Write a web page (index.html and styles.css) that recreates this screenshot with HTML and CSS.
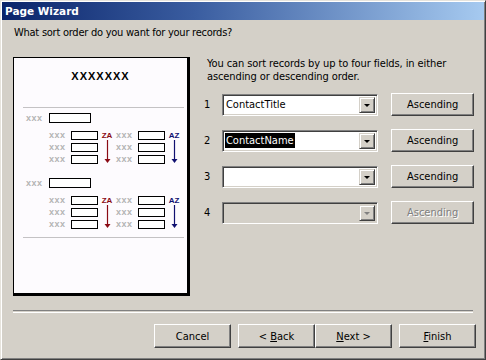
FILE: index.html
```html
<!DOCTYPE html>
<html>
<head>
  <title>Page Wizard</title>
  <link rel="stylesheet" href="styles.css">
</head>
<body>
  <div class="window">
    <div class="titlebar">Page Wizard</div>
    <div class="content">
      <p class="question">What sort order do you want for your records?</p>
      <div class="main">
        <div class="preview">
          <div class="preview-title">XXXXXXX</div>
          <div class="rule"></div>
          <div class="group">
            <div class="group-head"><span class="xxx">xxx</span><span class="box wide"></span></div>
            <div class="group-grid">
              <span class="xxx">xxx</span><span class="box"></span>
              <div class="sort desc"><span>ZA</span><svg width="7" height="24" viewBox="0 0 7 24"><line x1="3.5" y1="0" x2="3.5" y2="20" stroke="#8a0a14" stroke-width="1.2"/><path d="M0.5 19 L6.5 19 L3.5 23 Z" fill="#8a0a14"/></svg></div>
              <span class="xxx">xxx</span><span class="box"></span>
              <div class="sort asc"><span>AZ</span><svg width="7" height="24" viewBox="0 0 7 24"><line x1="3.5" y1="0" x2="3.5" y2="20" stroke="#101070" stroke-width="1.2"/><path d="M0.5 19 L6.5 19 L3.5 23 Z" fill="#101070"/></svg></div>
              <span class="xxx">xxx</span><span class="box"></span>
              <span class="xxx">xxx</span><span class="box"></span>
              <span class="xxx">xxx</span><span class="box"></span>
              <span class="xxx">xxx</span><span class="box"></span>
            </div>
          </div>
          <div class="group second">
            <div class="group-head"><span class="xxx">xxx</span><span class="box wide"></span></div>
            <div class="group-grid">
              <span class="xxx">xxx</span><span class="box"></span>
              <div class="sort desc"><span>ZA</span><svg width="7" height="24" viewBox="0 0 7 24"><line x1="3.5" y1="0" x2="3.5" y2="20" stroke="#8a0a14" stroke-width="1.2"/><path d="M0.5 19 L6.5 19 L3.5 23 Z" fill="#8a0a14"/></svg></div>
              <span class="xxx">xxx</span><span class="box"></span>
              <div class="sort asc"><span>AZ</span><svg width="7" height="24" viewBox="0 0 7 24"><line x1="3.5" y1="0" x2="3.5" y2="20" stroke="#101070" stroke-width="1.2"/><path d="M0.5 19 L6.5 19 L3.5 23 Z" fill="#101070"/></svg></div>
              <span class="xxx">xxx</span><span class="box"></span>
              <span class="xxx">xxx</span><span class="box"></span>
              <span class="xxx">xxx</span><span class="box"></span>
              <span class="xxx">xxx</span><span class="box"></span>
            </div>
          </div>
          <div class="rule lower"></div>
        </div>

        <div class="options">
          <p class="hint">You can sort records by up to four fields, in either<br>ascending or descending order.</p>
          <div class="sort-row">
            <span class="num">1</span>
            <div class="combo"><span class="value">ContactTitle</span><span class="drop"></span></div>
            <button class="btn order">Ascending</button>
          </div>
          <div class="sort-row">
            <span class="num">2</span>
            <div class="combo"><span class="value selected">ContactName</span><span class="drop"></span></div>
            <button class="btn order">Ascending</button>
          </div>
          <div class="sort-row">
            <span class="num">3</span>
            <div class="combo"><span class="value"></span><span class="drop"></span></div>
            <button class="btn order">Ascending</button>
          </div>
          <div class="sort-row disabled">
            <span class="num">4</span>
            <div class="combo"><span class="value"></span><span class="drop"></span></div>
            <button class="btn order" disabled>Ascending</button>
          </div>
        </div>
      </div>
      <div class="separator"></div>
      <div class="buttons">
        <button class="btn">Cancel</button>
        <button class="btn back">&lt; <u>B</u>ack</button>
        <button class="btn"><u>N</u>ext &gt;</button>
        <button class="btn finish"><u>F</u>inish</button>
      </div>
    </div>
  </div>
</body>
</html>
```

FILE: styles.css
```css
body {
  margin: 0;
  background-color: #d4d0c8;
  font-family: "DejaVu Sans Condensed", "DejaVu Sans", sans-serif;
  font-size: 11px;
  color: #000;
}

.window {
  width: 486px;
  height: 360px;
  box-sizing: border-box;
  background-color: #d4d0c8;
  border: 1px solid;
  border-color: #e6e3dc #404040 #404040 #e6e3dc;
  box-shadow: inset 1px 1px #fff, inset -1px -1px #808080;
  display: flex;
  flex-direction: column;
}

.titlebar {
  margin: 1px 1px 0;
  height: 18px;
  padding-left: 3px;
  line-height: 18px;
  font-family: "DejaVu Sans", sans-serif;
  font-weight: bold;
  font-size: 10.5px;
  color: #fff;
  background: linear-gradient(to right, #0a246a 0%, #3a5da0 40%, #a6caf0 100%);
}

.content {
  padding: 6px 0 0 12px;
}

.question {
  margin: 0 0 18px 1px;
  line-height: 13px;
  letter-spacing: -0.25px;
}

.main {
  display: flex;
  gap: 14px;
  height: 239px;
}

/* page preview */
.preview {
  width: 173px;
  height: 235px;
  background-color: #fdfbfe;
  border: 1px solid #000;
  border-right-width: 3px;
  border-bottom-width: 3px;
}

.preview-title {
  margin-top: 11px;
  height: 14px;
  line-height: 14px;
  text-align: center;
  font-family: "Liberation Sans", Arial, sans-serif;
  font-weight: bold;
  font-size: 11px;
  letter-spacing: 1px;
}

.rule {
  height: 1px;
  margin: 24px 3px 0 9px;
  background-color: #c4c2c4;
}

.rule.lower {
  margin-top: 8px;
}

.group {
  margin-top: 5px;
}

.group.second {
  margin-top: 14px;
}

.group-head {
  display: flex;
  align-items: center;
  height: 10px;
  padding-left: 12px;
}

.group-head .xxx {
  width: 23px;
}

.xxx {
  font-family: "Liberation Sans", Arial, sans-serif;
  font-size: 9px;
  font-weight: bold;
  letter-spacing: 0.5px;
  color: #b4b4b4;
  line-height: 9px;
}

.box {
  display: block;
  box-sizing: border-box;
  width: 27px;
  height: 9px;
  border: 1px solid #000;
  background-color: #fff;
}

.box.wide {
  width: 42px;
  height: 10px;
}

.group-grid {
  margin: 8px 0 0 35px;
  display: grid;
  grid-template-columns: 22px 27px 18px 22px 27px 18px;
  grid-template-rows: 9px 9px 9px;
  row-gap: 3px;
  align-items: center;
}

.sort {
  grid-row: 1 / span 3;
  align-self: start;
  display: flex;
  flex-direction: column;
  align-items: center;
  font-family: "Liberation Sans", Arial, sans-serif;
  font-size: 8px;
  font-weight: bold;
  line-height: 9px;
}

.sort svg {
  display: block;
}

.sort.desc {
  grid-column: 3;
  color: #8a0a14;
}

.sort.asc {
  grid-column: 6;
  color: #101070;
}

/* options on the right */
.options {
  width: 270px;
}

.hint {
  margin: 0 0 10px 3px;
  line-height: 13px;
  letter-spacing: -0.1px;
}

.sort-row {
  display: flex;
  align-items: center;
  height: 23px;
  margin-bottom: 13px;
}

.num {
  width: 18px;
}

.combo {
  display: flex;
  box-sizing: border-box;
  width: 157px;
  height: 22px;
  padding: 0;
  background-color: #fff;
  border: 1px solid;
  border-color: #808080 #fff #fff #808080;
  box-shadow: inset 1px 1px #404040, inset -1px -1px #d4d0c8;
}

.combo .value {
  flex: 1;
  align-self: center;
  margin-left: 2px;
  padding: 0 1px;
  line-height: 15px;
}

.combo .value.selected {
  flex: none;
  background-color: #000;
  color: #fff;
}

.selected + .drop {
  margin-left: auto;
}

.drop {
  position: relative;
  width: 16px;
  height: 16px;
  margin: 2px 2px 2px 0;
  box-sizing: border-box;
  background-color: #d4d0c8;
  border: 1px solid;
  border-color: #d4d0c8 #404040 #404040 #d4d0c8;
  box-shadow: inset 1px 1px #fff, inset -1px -1px #808080;
}

.drop::after {
  content: "";
  position: absolute;
  left: 4px;
  top: 6px;
  border-left: 3px solid transparent;
  border-right: 3px solid transparent;
  border-top: 3px solid #000;
}

.btn {
  box-sizing: border-box;
  width: 77px;
  height: 24px;
  padding: 0;
  font-family: "DejaVu Sans Condensed", "DejaVu Sans", sans-serif;
  font-size: 11px;
  color: #000;
  background-color: #d4d0c8;
  border: 1px solid;
  border-color: #fff #404040 #404040 #fff;
  box-shadow: inset -1px -1px #808080;
}

.btn.order {
  width: 83px;
  height: 23px;
  margin-left: 13px;
}

.btn:disabled {
  color: #808080;
  text-shadow: 1px 1px #fff;
}

.disabled .combo {
  background-color: #d4d0c8;
}

.disabled .drop::after {
  border-top-color: #808080;
}

.separator {
  height: 1px;
  margin: 14px 12px 0 0;
  border-top: 1px solid #808080;
  border-bottom: 1px solid #fff;
}

.buttons {
  display: flex;
  justify-content: flex-end;
  gap: 7px;
  margin: 11px 9px 0 0;
}

.btn.back {
  margin-right: -7px;
}

.buttons u {
  text-decoration: underline;
  text-underline-offset: 1px;
}
```
